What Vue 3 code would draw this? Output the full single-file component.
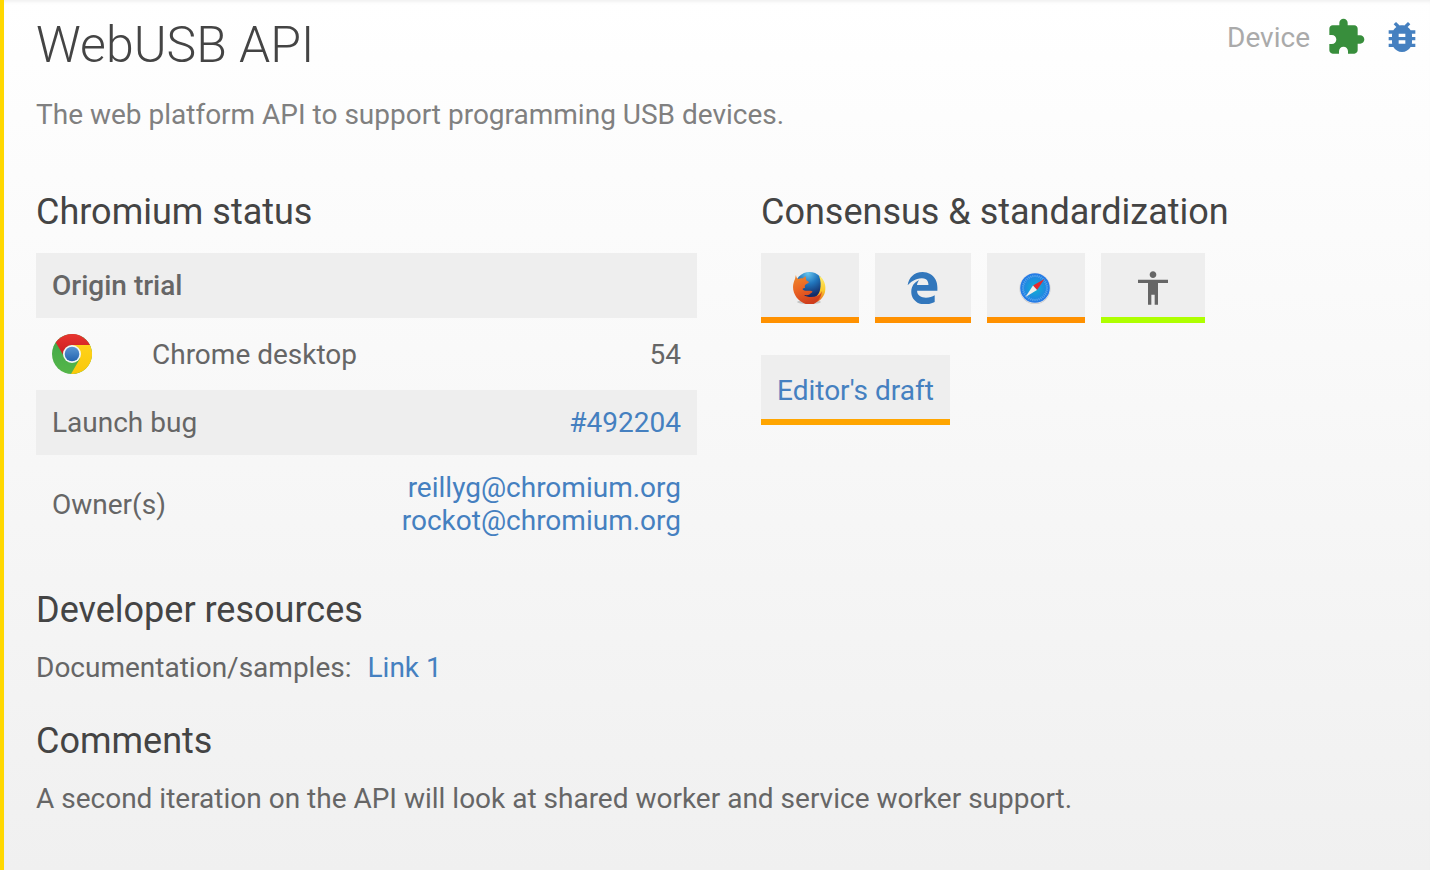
<script setup>
const owners = ['reillyg@chromium.org', 'rockot@chromium.org']
const ticks = Array.from({ length: 36 }, (_, i) => i * 10)
</script>

<template>
  <article class="feature">
    <header class="top">
      <h1>WebUSB API</h1>
      <div class="badges">
        <span class="category">Device</span>
        <svg class="icon green" viewBox="0 0 24 24" role="img" aria-label="Origin trial"><path d="M20.500 11H19V7c0-1.100-.9-2-2-2h-4V3.500C13 2.120 11.880 1 10.500 1S8 2.120 8 3.500V5H4c-1.100 0-1.990.9-1.990 2v3.800H3.500c1.490 0 2.700 1.210 2.700 2.700s-1.210 2.700-2.700 2.700H2V20c0 1.100.9 2 2 2h3.800v-1.500c0-1.490 1.210-2.700 2.700-2.700s2.700 1.210 2.700 2.700V22H17c1.100 0 2-.9 2-2v-4h1.500c1.380 0 2.500-1.120 2.500-2.500S21.880 11 20.500 11z" /></svg>
        <a class="bug" href="#bug" aria-label="Launch bug">
          <svg class="icon" viewBox="0 0 24 24"><path d="M20 8h-2.810c-.45-.78-1.070-1.450-1.820-1.960L17 4.410 15.590 3l-2.170 2.170C12.960 5.060 12.490 5 12 5s-.96.06-1.410.17L8.410 3 7 4.410l1.620 1.630C7.880 6.550 7.260 7.220 6.810 8H4v2h2.090c-.05.33-.09.66-.09 1v1H4v2h2v1c0 .34.04.67.09 1H4v2h2.810c1.040 1.790 2.970 3 5.190 3s4.150-1.210 5.190-3H20v-2h-2.090c.05-.33.09-.66.09-1v-1h2v-2h-2v-1c0-.34-.04-.67-.09-1H20V8zm-6 8h-4v-2h4v2zm0-4h-4v-2h4v2z" /></svg>
        </a>
      </div>
    </header>
    <p class="summary">The web platform API to support programming USB devices.</p>

    <div class="columns">
      <section>
        <h2>Chromium status</h2>
        <table>
          <tbody>
            <tr class="shaded"><th colspan="3" class="strong">Origin trial</th></tr>
            <tr>
              <td class="logo">
                <svg class="chrome" viewBox="0 0 40 40" aria-hidden="true">
                  <defs>
                    <linearGradient id="cr" x1="0" y1="0" x2="0" y2="1"><stop offset="0" stop-color="#e8352f" /><stop offset="1" stop-color="#c91d20" /></linearGradient>
                    <linearGradient id="cg" x1="0" y1="0" x2="0" y2="1"><stop offset="0" stop-color="#3fa648" /><stop offset="1" stop-color="#55b649" /></linearGradient>
                    <linearGradient id="cy" x1="0" y1="0" x2="0" y2="1"><stop offset="0" stop-color="#ffd21a" /><stop offset="1" stop-color="#f9c80a" /></linearGradient>
                    <linearGradient id="cb" x1="0" y1="0" x2="0" y2="1"><stop offset="0" stop-color="#5a96d2" /><stop offset="1" stop-color="#2464b0" /></linearGradient>
                  </defs>
                  <circle cx="20" cy="20" r="20" fill="url(#cg)" />
                  <path d="M20 11H37.900A20 20 0 0 1 19 40L28 24.500z" fill="url(#cy)" />
                  <path d="M3.700 8.500A20 20 0 0 1 37.900 11H20A9 9 0 0 0 11.500 21.500z" fill="url(#cr)" />
                  <circle cx="20" cy="20" r="9" fill="#f4f6f6" />
                  <circle cx="20" cy="20" r="7.300" fill="url(#cb)" />
                </svg>
              </td>
              <td class="platform">Chrome desktop</td>
              <td class="value">54</td>
            </tr>
            <tr class="shaded">
              <th colspan="2">Launch bug</th>
              <td class="value"><a href="#492204">#492204</a></td>
            </tr>
            <tr>
              <th colspan="2">Owner(s)</th>
              <td class="value"><a v-for="o in owners" :key="o" class="owner" :href="'mailto:' + o">{{ o }}</a></td>
            </tr>
          </tbody>
        </table>
      </section>

      <section>
        <h2>Consensus &amp; standardization</h2>
        <div class="views">
          <div class="view">
            <svg class="vendor wide" viewBox="0 0 34 32" role="img" aria-label="Firefox">
              <defs>
                <radialGradient id="fb" cx=".45" cy=".05" r=".8"><stop offset="0" stop-color="#65c4ef" /><stop offset=".45" stop-color="#2176bd" /><stop offset=".95" stop-color="#142c68" /></radialGradient>
                <linearGradient id="fo" x1="0" y1="0" x2=".4" y2="1"><stop offset="0" stop-color="#ef8b2c" /><stop offset=".5" stop-color="#ea6424" /><stop offset="1" stop-color="#cf3d1c" /></linearGradient>
                <linearGradient id="fy" x1="0" y1="0" x2="0" y2="1"><stop offset="0" stop-color="#ffef70" /><stop offset=".55" stop-color="#fbc92b" /><stop offset="1" stop-color="#e45a20" /></linearGradient>
              </defs>
              <ellipse cx="16" cy="30" rx="12" ry="2" fill="#c5c5c5" />
              <circle cx="16.500" cy="14.500" r="14.500" fill="url(#fb)" />
              <path d="M26 3.500C31 7 33.500 13 32 20c-1.500 6-6 10-12 11l-6-4c8 0 12-4 13-9 1-5 1-9-1-14.500z" fill="url(#fy)" />
              <path d="M3 3c0 2 1 3 2 4 2-1 4-1 5-.5 1-1.500 2-2 3-2-.5 1.500 0 3 .5 4l2.500 1.500c0 1-3 2-4 3-.5 1.500 0 2 0 3-1 0-2 0-2.500 1 2 3 6 1 9 2 1.500.5 1 1.500-.5 2-2 3-5 2-7 2 3 2.500 9 2.500 13 1 3-1 4-3 5-5-1 8-6 14-13 14C7 31 0 24 0 15c0-3 1-6 2-8 .5-2 .5-3 1-4z" fill="url(#fo)" />
            </svg>
          </div>
          <div class="view">
            <svg class="vendor" viewBox="0 0 24 24" role="img" aria-label="Edge">
              <path d="M.481 10.004C1.356 4.370 4.902.111 11.781 0c4.152.08 7.566 1.962 9.598 5.547 1.022 1.872 1.340 3.841 1.408 6.010v2.548H7.562c.071 6.283 9.250 6.067 13.201 3.298v5.115c-2.314 1.388-7.565 2.629-11.631 1.031-3.465-1.300-5.929-4.920-5.916-8.413-.113-4.527 2.251-7.524 5.916-9.223-.779.96-1.369 2.021-1.678 3.845h8.597s.504-5.139-4.866-5.139C6.122 4.793 2.472 7.700.481 10.004z" fill="#3277bc" />
            </svg>
          </div>
          <div class="view">
            <svg class="vendor wide" viewBox="0 0 34 32" role="img" aria-label="Safari">
              <defs>
                <radialGradient id="sb"><stop offset="0" stop-color="#12b4d2" /><stop offset=".5" stop-color="#1996dc" /><stop offset="1" stop-color="#2878e6" /></radialGradient>
              </defs>
              <circle cx="16" cy="16.500" r="15.500" fill="#bdbdbd" />
              <circle cx="16" cy="16" r="15.500" fill="#e8e8e8" />
              <circle cx="16" cy="16" r="14.800" fill="url(#sb)" />
              <path v-for="t in ticks" :key="t" d="M16 3v2" stroke="#8cc4f4" stroke-width=".6" :transform="`rotate(${t} 16 16)`" />
              <path d="M25.500 7L14 13.500l4 4.500z" fill="#e5282c" />
              <path d="M6.500 25L14 13.500l4 4.500z" fill="#f1efea" />
            </svg>
          </div>
          <div class="view web">
            <svg class="icon grey" viewBox="0 0 24 24" role="img" aria-label="Web developers"><path d="M12 2c1.100 0 2 .9 2 2s-.9 2-2 2-2-.9-2-2 .9-2 2-2zm9 7h-6v13h-2v-6h-2v6H9V9H3V7h18v2z" /></svg>
          </div>
        </div>
        <div class="standard"><a href="#draft">Editor's draft</a></div>
      </section>
    </div>

    <section class="block">
      <h2>Developer resources</h2>
      <p class="resources"><span>Documentation/samples:</span><a href="#link1">Link 1</a></p>
    </section>
    <section class="block">
      <h2>Comments</h2>
      <p>A second iteration on the API will look at shared worker and service worker support.</p>
    </section>
  </article>
</template>

<style>
body { margin: 0; }
</style>

<style scoped>
.feature {
  box-sizing: border-box;
  min-height: 100vh;
  padding: 12px 8px 32px 32px;
  border-left: 4px solid #ffd800;
  background: linear-gradient(#fff, #f0f0f0);
  box-shadow: inset 0 4px 4px -3px #eaeaea;
  color: #666;
  font: 28px/33px Roboto, "Liberation Sans", sans-serif;
}
h1, h2, p { margin: 0; }
h1 { color: #444; font-size: 50px; font-weight: 300; line-height: 66px; }
h2 { margin-bottom: 20px; color: #444; font-size: 36px; font-weight: 400; line-height: 42px; }
a { color: #4580c0; text-decoration: none; }
.top { display: flex; justify-content: space-between; align-items: flex-start; }
.badges { display: flex; align-items: center; gap: 16px; padding-top: 5px; }
.category { color: #aaa; }
.icon { display: block; width: 40px; height: 40px; fill: currentColor; }
.green { color: #388e3c; }
.grey { color: #666; }
.summary { margin-top: 20px; color: #808080; }
.columns { display: grid; grid-template-columns: 1fr 1fr; gap: 64px; margin-top: 60px; }
table { width: 100%; border-collapse: collapse; }
th, td { padding: 16px; text-align: left; font-weight: 400; }
.strong { font-weight: 500; }
.shaded { background: #eee; }
.logo { width: 68px; }
.chrome { display: block; width: 40px; height: 40px; }
.value { text-align: right; }
.owner { display: block; }
.views { display: flex; flex-wrap: wrap; gap: 16px; margin-bottom: 32px; }
.view {
  display: flex;
  align-items: center;
  box-sizing: border-box;
  height: 70px;
  padding: 6px 32px 0;
  border-bottom: 6px solid #ff9100;
  background: #eee;
}
.web { border-color: #aeff00; }
.vendor { display: block; width: 32px; height: 32px; }
.wide { width: 34px; }
.standard {
  display: inline-block;
  padding: 19px 16px 12px;
  border-bottom: 6px solid #ffa500;
  background: #eee;
}
.block { margin-top: 36px; }
.resources { display: flex; gap: 16px; }
</style>
